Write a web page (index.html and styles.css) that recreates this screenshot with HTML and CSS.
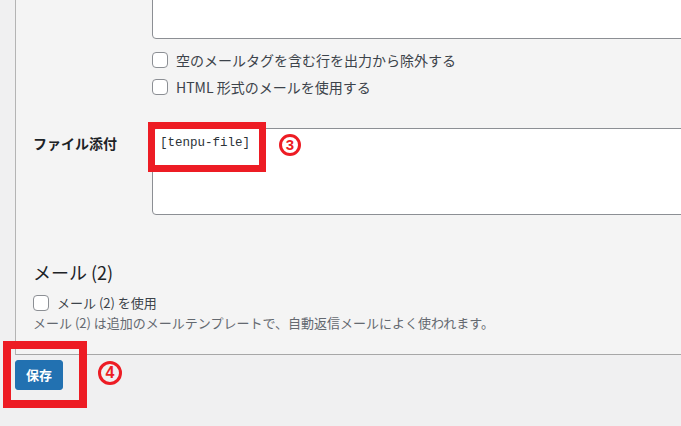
FILE: index.html
```html
<!DOCTYPE html>
<html lang="ja">
<head>
<meta charset="utf-8">
<title>メール設定</title>
<link rel="stylesheet" href="styles.css">
</head>
<body>
<div class="panel">
  <div class="row">
    <div class="th"></div>
    <div class="td">
      <textarea class="field stub" readonly></textarea>
      <div class="checks">
        <label class="check"><input type="checkbox"><span>空のメールタグを含む行を出力から除外する</span></label>
        <label class="check"><input type="checkbox"><span>HTML 形式のメールを使用する</span></label>
      </div>
    </div>
  </div>
  <div class="row row-attach">
    <div class="th">ファイル添付</div>
    <div class="td anchor">
      <textarea class="field attach" readonly>[tenpu-file]</textarea>
      <span class="mark mark-box1"></span>
      <span class="num num3">3</span>
    </div>
  </div>
  <h2 class="heading">メール (2)</h2>
  <label class="check check-small"><input type="checkbox"><span>メール (2) を使用</span></label>
  <p class="desc">メール (2) は追加のメールテンプレートで、自動返信メールによく使われます。</p>
</div>
<div class="footer">
  <div class="anchor">
    <button class="save">保存</button>
    <span class="mark mark-box2"></span>
    <span class="num num4">4</span>
  </div>
</div>
</body>
</html>
```
FILE: styles.css
```css
* { box-sizing: border-box; }
html, body { margin: 0; padding: 0; }
body {
  width: 681px;
  height: 426px;
  overflow: hidden;
  background: #f0f0f1;
  font-family: "Noto Sans CJK JP", "Noto Sans", sans-serif;
  color: #3c434a;
}
.panel {
  margin-left: 15px;
  border-left: 1px solid #b4b4b4;
  border-bottom: 1px solid #a7a7a7;
  background: #f4f4f4;
  padding: 0 0 22px 17px;
}
.row {
  display: grid;
  grid-template-columns: 119px 1fr;
}
.th {
  font-size: 14px;
  font-weight: 700;
  color: #1d2327;
  line-height: 20px;
}
.td { min-width: 0; }
.anchor { position: relative; }
.field {
  display: block;
  width: 560px;
  margin: 0;
  border: 1px solid #8c8f94;
  border-radius: 4px;
  background: #fff;
  resize: none;
  outline: none;
  font-family: "Liberation Mono", "DejaVu Sans Mono", monospace;
  font-size: 12.5px;
  line-height: 20px;
  color: #2c3338;
  padding: 4px 7px;
}
.stub {
  height: 79px;
  margin-top: -40px;
}
.checks {
  margin-top: 13px;
  display: flex;
  flex-direction: column;
  gap: 11px;
}
.check {
  display: flex;
  align-items: center;
  gap: 8px;
  height: 16px;
  font-size: 14px;
  line-height: 16px;
  color: #3c434a;
}
.check input {
  appearance: none;
  -webkit-appearance: none;
  width: 16px;
  height: 16px;
  margin: 0;
  border: 1px solid #8c8f94;
  border-radius: 4px;
  background: #fff;
  flex: none;
}
.row-attach { margin-top: 33px; }
.row-attach .th { padding-top: 5px; }
.attach { height: 87px; }
.heading {
  margin: 45px 0 0;
  font-size: 18px;
  line-height: 24px;
  font-weight: 400;
  color: #1d2327;
}
.check-small {
  margin-top: 11px;
  font-size: 13px;
}
.desc {
  margin: 3px 0 0;
  font-size: 13px;
  line-height: 18px;
  color: #646970;
}
.footer {
  padding: 5px 0 0 15px;
}
.footer .anchor { width: 48px; }
.save {
  display: block;
  width: 48px;
  height: 30px;
  margin: 0;
  padding: 0 10px;
  border: 1px solid #2271b1;
  border-radius: 3px;
  background: #2271b1;
  color: #fff;
  font-family: "Noto Sans CJK JP", sans-serif;
  font-size: 13px;
  font-weight: 700;
  line-height: 28px;
}
.mark {
  position: absolute;
  border: 7px solid #ed1c24;
}
.mark-box1 {
  left: -4px;
  top: -6px;
  width: 118px;
  height: 50px;
}
.mark-box2 {
  left: -12px;
  top: -19px;
  width: 84px;
  height: 67px;
  border-width: 8px;
}
.num {
  position: absolute;
  width: 22px;
  height: 22px;
  border: 3px solid #ed1c24;
  border-radius: 50%;
  color: #ed1c24;
  font-family: "Liberation Sans", Arial, sans-serif;
  font-weight: 700;
  font-size: 15px;
  line-height: 16px;
  text-align: center;
}
.num3 { left: 127px; top: 6px; }
.num4 { left: 83px; top: 1px; width: 24px; height: 24px; line-height: 18px; font-size: 16px; }
```
